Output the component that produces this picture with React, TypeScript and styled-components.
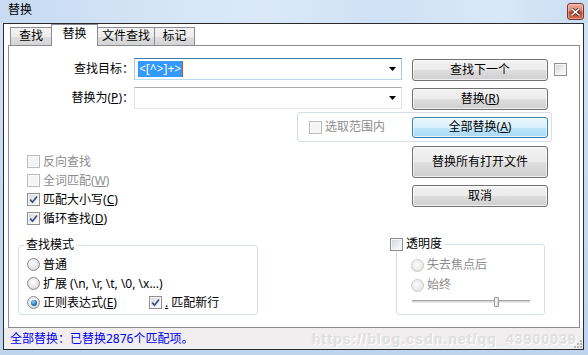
import React from "react";
import styled, { createGlobalStyle, css } from "styled-components";

const UI = `"Noto Sans", "Noto Sans CJK SC", sans-serif`;

const Global = createGlobalStyle`
  html, body { margin: 0; padding: 0; background: #fff; }
  body { font-family: ${UI}; font-size: 12px; color: #000; }
  * { box-sizing: border-box; }
`;

const Frame = styled.div`
  width: 588px;
  height: 355px;
  display: flex;
  flex-direction: column;
  overflow: hidden;
  background: linear-gradient(180deg, #d4e4f7 0%, #c6daf2 50%, #bdd3ee 100%);
`;

const TitleBar = styled.div`
  height: 23px;
  flex: none;
  display: flex;
  align-items: center;
  padding: 0 4px 0 8px;
  background: linear-gradient(90deg, #c7daf1 0%, #d6e6f8 30%, #dbe9f9 45%, #cfe1f6 65%, #d9e8f9 85%, #cadcf2 100%);
`;

const Title = styled.div`
  font-size: 12px;
  line-height: 14px;
  padding-bottom: 3px;
  color: #000;
`;

const CloseBtn = styled.div`
  margin-left: auto;
  width: 17px;
  height: 17px;
  border: 1px solid #6f3a32;
  border-radius: 3px;
  display: flex;
  align-items: center;
  justify-content: center;
  background: linear-gradient(180deg, #eeb0a0 0%, #de846e 45%, #c6432b 52%, #d5694d 100%);
  box-shadow: inset 0 0 0 1px rgba(255, 220, 210, 0.45);
`;

const Client = styled.div`
  flex: 1;
  margin: 0 4px 5px 3px;
  border: 1px solid #2a2a2a;
  background: #fff;
  display: flex;
  flex-direction: column;
`;

const TabStrip = styled.div`
  height: 21px;
  flex: none;
  display: flex;
  align-items: flex-end;
  padding-left: 6px;
  position: relative;
  z-index: 2;
`;

const Tab = styled.div<{ $w: number; $active?: boolean }>`
  width: ${(p) => p.$w}px;
  height: 18px;
  margin-left: -1px;
  border: 1px solid #898c95;
  border-bottom: none;
  text-align: center;
  font-size: 12px;
  line-height: 16px;
  background: linear-gradient(180deg, #f4f4f4 0%, #ececec 50%, #dedede 55%, #d4d4d4 100%);
  &:first-child { margin-left: 0; }
  ${(p) =>
    p.$active &&
    css`
      height: 22px;
      margin-bottom: -1px;
      background: #fff;
      padding-top: 1px;
      position: relative;
      z-index: 2;
    `}
`;

const Panel = styled.div`
  height: 283px;
  flex: none;
  margin: 0 3px 0 4px;
  border: 1px solid #898c95;
  display: flex;
  flex-direction: column;
  position: relative;
  z-index: 1;
`;

const FieldRow = styled.div<{ $mt: number }>`
  display: flex;
  align-items: flex-start;
  height: 22px;
  margin-top: ${(p) => p.$mt}px;
`;

const FieldLabel = styled.div`
  width: 125px;
  height: 22px;
  line-height: 22px;
  text-align: right;
  white-space: nowrap;
`;

const Combo = styled.div<{ $focused?: boolean }>`
  width: 268px;
  height: 22px;
  display: flex;
  align-items: center;
  padding: 0 5px 0 3px;
  border: 1px solid;
  border-color: ${(p) =>
    p.$focused ? "#3d7bad #a4c9e3 #b7d9ed #a4c9e3" : "#abadb3 #e2e3ea #e3e9ef #e2e3ea"};
  background: #fff;
`;

const Selection = styled.span`
  background: #3399ff;
  color: #fff;
  line-height: 16px;
  height: 16px;
  padding: 0 1px;
  white-space: pre;
`;

const Caret = styled.span`
  width: 1px;
  height: 16px;
  background: #c05a1a;
`;

const ArrowBox = styled.span`
  margin-left: auto;
  display: flex;
`;

const Button = styled.div<{ $h?: number; $primary?: boolean; $mt?: number; $ml?: number }>`
  width: 136px;
  height: ${(p) => p.$h ?? 22}px;
  margin-top: ${(p) => p.$mt ?? 0}px;
  margin-left: ${(p) => p.$ml ?? 0}px;
  flex: none;
  border: 1px solid ${(p) => (p.$primary ? "#3c7fb1" : "#707070")};
  border-radius: 3px;
  display: flex;
  align-items: center;
  justify-content: center;
  font-size: 12px;
  line-height: 14px;
  color: #000;
  box-shadow: inset 0 0 0 1px rgba(255, 255, 255, 0.7);
  background: ${(p) =>
    p.$primary
      ? "linear-gradient(180deg, #eaf6fd 0%, #d9f0fc 50%, #bee6fd 52%, #a7d9f5 100%)"
      : "linear-gradient(180deg, #f2f2f2 0%, #ebebeb 50%, #dddddd 52%, #cfcfcf 100%)"};
`;

const SideCheck = styled.div`
  margin-left: 6px;
  align-self: center;
  display: flex;
`;

const Box = styled.span<{ $disabled?: boolean }>`
  width: 13px;
  height: 13px;
  flex: none;
  display: inline-flex;
  align-items: center;
  justify-content: center;
  border: 1px solid ${(p) => (p.$disabled ? "#bcbcbc" : "#8e8f8f")};
  background: ${(p) =>
    p.$disabled ? "#f4f4f4" : "linear-gradient(135deg, #cfd3d8 0%, #eceeef 55%, #fbfbfb 100%)"};
  box-shadow: inset 0 0 0 1px ${(p) => (p.$disabled ? "#fafafa" : "#f7f7f7")};
`;

const Radio = styled.span<{ $on?: boolean; $disabled?: boolean }>`
  width: 13px;
  height: 13px;
  flex: none;
  border-radius: 50%;
  display: inline-flex;
  align-items: center;
  justify-content: center;
  border: 1px solid ${(p) => (p.$disabled ? "#c9c9c9" : "#8c8c8c")};
  background: ${(p) =>
    p.$disabled
      ? "radial-gradient(circle at 45% 40%, #fbfbfb 0%, #ececec 55%, #d9d9d9 100%)"
      : "radial-gradient(circle at 45% 38%, #ffffff 0%, #ececec 45%, #c4c4c4 100%)"};
  &::after {
    content: "";
    display: ${(p) => (p.$on ? "block" : "none")};
    width: 6px;
    height: 6px;
    border-radius: 50%;
    background: radial-gradient(circle at 40% 35%, #9ed8ff 0%, #2b86cc 45%, #0c3f72 100%);
  }
`;

const Item = styled.div<{ $disabled?: boolean; $h?: number; $w?: number }>`
  display: flex;
  align-items: center;
  gap: 3px;
  height: ${(p) => p.$h ?? 19}px;
  ${(p) => p.$w && `width: ${p.$w}px; flex: none;`}
  white-space: nowrap;
  color: ${(p) => (p.$disabled ? "#8d8d8d" : "#000")};
  line-height: 14px;
`;

const Text = styled.span`
  white-space: pre;
`;

const Key = styled.span`
  text-decoration: underline;
  text-underline-offset: 1px;
`;

const ScopeGroup = styled.div`
  margin: 3px 0 0 288px;
  width: 255px;
  height: 30px;
  flex: none;
  border: 1px solid #d5dfe5;
  border-radius: 3px;
  display: flex;
  align-items: center;
  justify-content: space-between;
  padding: 0 3px 0 11px;
`;

const Middle = styled.div`
  display: grid;
  grid-template-columns: 403px 136px;
  align-items: start;
`;

const OptionList = styled.div`
  padding: 10px 0 0 18px;
  display: flex;
  flex-direction: column;
`;

const ButtonStack = styled.div`
  padding-top: 4px;
  display: flex;
  flex-direction: column;
  gap: 7px;
`;

const Bottom = styled.div`
  display: flex;
  align-items: flex-start;
  margin-top: 17px;
`;

const GroupBox = styled.div<{ $w: number; $h: number; $ml: number; $mt?: number; $pad: string }>`
  position: relative;
  width: ${(p) => p.$w}px;
  height: ${(p) => p.$h}px;
  margin-left: ${(p) => p.$ml}px;
  margin-top: ${(p) => p.$mt ?? 0}px;
  flex: none;
  border: 1px solid #d5dfe5;
  border-radius: 3px;
  padding: ${(p) => p.$pad};
  display: flex;
  flex-direction: column;
`;

const Legend = styled.div<{ $left: number; $pad: string }>`
  position: absolute;
  top: -8px;
  left: ${(p) => p.$left}px;
  padding: ${(p) => p.$pad};
  background: #fff;
  height: 14px;
  line-height: 14px;
  display: flex;
  align-items: center;
  gap: 3px;
  white-space: nowrap;
`;

const RadioRow = styled.div`
  display: flex;
  align-items: center;
`;

const SliderRow = styled.div`
  position: relative;
  height: 12px;
  margin-left: 1px;
`;

const Track = styled.div`
  position: absolute;
  top: 5px;
  left: 0;
  width: 118px;
  height: 3px;
  border-top: 1px solid #a7a7a7;
  border-bottom: 1px solid #e8e8e8;
  background: #d6d6d6;
`;

const Thumb = styled.div`
  position: absolute;
  top: 2px;
  left: 82px;
  width: 5px;
  height: 10px;
  border: 1px solid #9a9a9a;
  border-radius: 1px;
  background: linear-gradient(90deg, #fafafa, #dcdcdc);
`;

const StatusBar = styled.div`
  height: 21px;
  flex: none;
  display: flex;
  align-items: center;
  padding-left: 6px;
  background: #f0eeef;
  position: relative;
`;

const StatusText = styled.div`
  color: #0000f0;
  line-height: 14px;
  white-space: nowrap;
`;

const Watermark = styled.div`
  margin-left: auto;
  margin-right: 6px;
  font-family: "Liberation Sans", Arial, sans-serif;
  font-weight: bold;
  font-size: 14px;
  letter-spacing: 1.1px;
  color: #e0dfe0;
  text-shadow: 1px 1px 0 #ffffff, -1px 0 0 #e9e8e9;
  white-space: nowrap;
  line-height: 16px;
`;

const Grip = styled.div`
  position: absolute;
  right: 1px;
  bottom: 1px;
  display: flex;
`;

const CheckMark = () => (
  <svg width="9" height="9" viewBox="0 0 9 9">
    <path d="M1.2 4.6 L3.5 7.2 L8 1.4" fill="none" stroke="#3a4f86" strokeWidth="1.7" />
  </svg>
);

const CheckBox = ({ checked, disabled }: { checked?: boolean; disabled?: boolean }) => (
  <Box $disabled={disabled}>{checked && <CheckMark />}</Box>
);

const DropArrow = () => (
  <ArrowBox>
    <svg width="7" height="4" viewBox="0 0 7 4">
      <path d="M0 0 H7 L3.5 4 Z" fill="#000" />
    </svg>
  </ArrowBox>
);

const Mn = ({ label, k }: { label: string; k?: string }) => (
  <Text>
    {label}
    {k && (
      <>
        (<Key>{k}</Key>)
      </>
    )}
  </Text>
);

const TABS = [
  { label: "查找", w: 42 },
  { label: "替换", w: 47, active: true },
  { label: "文件查找", w: 58 },
  { label: "标记", w: 41 },
];

const EXT = "扩展 (\\n, \\r, \\t, \\0, \\x...)";

export default function App() {
  return (
    <>
      <Global />
      <Frame>
        <TitleBar>
          <Title>替换</Title>
          <CloseBtn>
            <svg width="9" height="8" viewBox="0 0 9 8">
              <path d="M1 1 L8 7 M8 1 L1 7" stroke="#3a1a14" strokeWidth="3" strokeLinecap="square" />
              <path d="M1 1 L8 7 M8 1 L1 7" stroke="#ffffff" strokeWidth="1.6" strokeLinecap="square" />
            </svg>
          </CloseBtn>
        </TitleBar>
        <Client>
          <TabStrip>
            {TABS.map((t) => (
              <Tab key={t.label} $w={t.w} $active={t.active}>
                {t.label}
              </Tab>
            ))}
          </TabStrip>
          <Panel>
            <FieldRow $mt={12}>
              <FieldLabel>查找目标：</FieldLabel>
              <Combo $focused>
                <Selection>{"<[^>]+>"}</Selection>
                <Caret />
                <DropArrow />
              </Combo>
              <Button $mt={1} $ml={10}>查找下一个</Button>
              <SideCheck>
                <CheckBox />
              </SideCheck>
            </FieldRow>
            <FieldRow $mt={7}>
              <FieldLabel>
                <Mn label="替换为" k="P" />：
              </FieldLabel>
              <Combo>
                <DropArrow />
              </Combo>
              <Button $mt={1} $ml={10}>
                <Mn label="替换" k="R" />
              </Button>
            </FieldRow>
            <ScopeGroup>
              <Item $disabled $h={16}>
                <CheckBox disabled />
                <Text>选取范围内</Text>
              </Item>
              <Button $h={21} $primary>
                <Mn label="全部替换" k="A" />
              </Button>
            </ScopeGroup>
            <Middle>
              <OptionList>
                <Item $disabled>
                  <CheckBox disabled />
                  <Text>反向查找</Text>
                </Item>
                <Item $disabled>
                  <CheckBox disabled />
                  <Mn label="全词匹配" k="W" />
                </Item>
                <Item>
                  <CheckBox checked />
                  <Mn label="匹配大小写" k="C" />
                </Item>
                <Item>
                  <CheckBox checked />
                  <Mn label="循环查找" k="D" />
                </Item>
              </OptionList>
              <ButtonStack>
                <Button $h={32}>替换所有打开文件</Button>
                <Button>取消</Button>
              </ButtonStack>
            </Middle>
            <Bottom>
              <GroupBox $w={240} $h={70} $ml={9} $pad="9px 0 0 8px">
                <Legend $left={5} $pad="0 2px">查找模式</Legend>
                <Item>
                  <Radio />
                  <Text>普通</Text>
                </Item>
                <Item>
                  <Radio />
                  <Text>{EXT}</Text>
                </Item>
                <RadioRow>
                  <Item $w={122}>
                    <Radio $on />
                    <Mn label="正则表达式" k="E" />
                  </Item>
                  <Item>
                    <CheckBox checked />
                    <Text>
                      <Key>.</Key> 匹配新行
                    </Text>
                  </Item>
                </RadioRow>
              </GroupBox>
              <GroupBox $w={149} $h={71} $ml={138} $mt={-1} $pad="10px 0 0 14px">
                <Legend $left={-7} $pad="0 2px 0 0">
                  <CheckBox />
                  <Text>透明度</Text>
                </Legend>
                <Item $disabled $h={20}>
                  <Radio $disabled />
                  <Text>失去焦点后</Text>
                </Item>
                <Item $disabled $h={20}>
                  <Radio $disabled />
                  <Text>始终</Text>
                </Item>
                <SliderRow>
                  <Track />
                  <Thumb />
                </SliderRow>
              </GroupBox>
            </Bottom>
          </Panel>
          <StatusBar>
            <StatusText>全部替换：已替换2876个匹配项。</StatusText>
            <Watermark>https://blog.csdn.net/qq_43900039</Watermark>
            <Grip>
              <svg width="8" height="8" viewBox="0 0 8 8">
                {[
                  [6, 0],
                  [6, 3],
                  [3, 3],
                  [6, 6],
                  [3, 6],
                  [0, 6],
                ].map(([x, y]) => (
                  <rect key={`${x}-${y}`} x={x} y={y} width="2" height="2" fill="#b5b5b5" />
                ))}
              </svg>
            </Grip>
          </StatusBar>
        </Client>
      </Frame>
    </>
  );
}
